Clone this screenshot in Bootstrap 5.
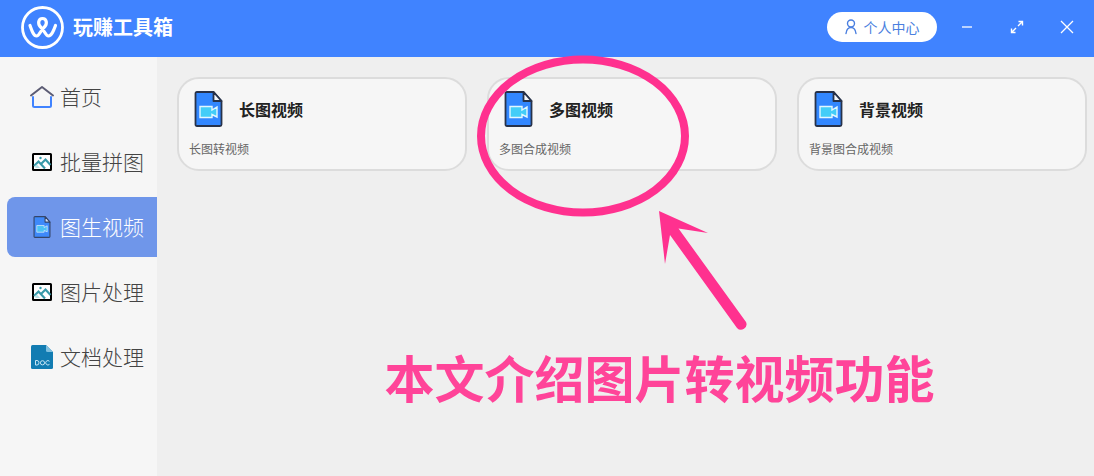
<!DOCTYPE html>
<html lang="zh-CN">
<head>
<meta charset="utf-8">
<meta name="viewport" content="width=device-width, initial-scale=1">
<title>玩赚工具箱</title>
<link href="https://cdn.jsdelivr.net/npm/bootstrap@5.3.0/dist/css/bootstrap.min.css" rel="stylesheet">
<style>
  body { font-family: "Noto Sans CJK SC", sans-serif; background: #efefef; color: #333; }
  svg { flex: none; display: block; }
  .app-bar { height: 57px; background: #4083ff; padding: 0 2px 3px 21px; }
  .brand-name { font-size: 20px; line-height: 24px; margin-left: 9px; }
  .user-btn { width: 110px; height: 30px; font-size: 14px; line-height: 20px; color: #4a7fe0; gap: 7px; margin-right: 5px; }
  .user-btn:hover { background: #fff; color: #2f66cc; }
  .win-btn { width: 50px; height: 50px; }
  .side { width: 157px; flex: none; background: #f6f6f6; padding: 10px 0 0 7px; gap: 5px; }
  .side-link { height: 60px; padding-left: 22px; gap: 5px; font-size: 21px; line-height: 28px; font-weight: 300; color: #444; border-radius: 8px 0 0 8px; }
  .side-link svg { width: 26px; }
  .side-link span { padding-bottom: 2px; }
  .side-link.active { background: #6f96ea; color: #fff; }
  .side-link.active svg { opacity: .8; }
  .stage { padding: 20px 7px 20px 20px; min-width: 0; }
  .tools { display: grid; grid-template-columns: repeat(3, minmax(0, 1fr)); gap: 20px; }
  .tool { background: #f6f6f6; border: 2px solid #dcdcdc; border-radius: 22px; padding: 12px 10px 11px; color: #222; }
  .tool-head { gap: 16px; padding-left: 5px; height: 36px; }
  .tool-name { font-size: 16px; line-height: 20px; }
  .tool-note { font-size: 12px; line-height: 18px; color: #666; margin-top: 13px; }
  .callout { left: -12px; top: -24px; z-index: 5; pointer-events: none; }
  .caption { font-size: 50px; line-height: 60px; color: #ff4499; margin-top: 175px; padding-left: 55px; }
</style>
</head>
<body>
<svg width="0" height="0" class="position-absolute" aria-hidden="true">
  <symbol id="video-file" viewBox="0 0 28 36">
    <path d="M1 2.500q0-1.500 1.500-1.500H19L27 10V33.500q0 1.500-1.500 1.500H2.500Q1 35 1 33.500Z" fill="#3287ff" stroke="#27324a" stroke-width="1.800"/>
    <path d="M19 1V10H27Z" fill="#f4f7fb" stroke="#27324a" stroke-width="1.800" stroke-linejoin="round"/>
    <path d="M5.500 15.500H17.500V19L22.500 16V26L17.500 23.500V26.500H5.500Z" fill="#43cdf8" stroke="#e2f7ff" stroke-width="1.400"/>
  </symbol>
  <symbol id="picture" viewBox="0 0 26 20">
    <rect x="4" y="2" width="18" height="16" rx=".5" fill="#fff" stroke="#000" stroke-width="2"/>
    <path d="M5 14 9.500 9.500 16 16.500M11.500 12.500 16.500 7.500 21.500 13" fill="none" stroke="#389aaa" stroke-width="2.200"/>
    <path d="M5 14.500 8 12.500 11 16H7Z" fill="#b9e2e7"/>
    <circle cx="11.500" cy="6" r="1.200" fill="#389aaa"/>
  </symbol>
</svg>
<div class="d-flex flex-column min-vh-100">
  <header class="app-bar d-flex align-items-center text-white">
    <svg width="43" height="43" viewBox="0 0 43 43" fill="none" stroke="#fff" stroke-linecap="round" stroke-linejoin="round" aria-hidden="true">
      <circle cx="21.500" cy="21.500" r="20" stroke-width="2.800"/>
      <path d="M9 19.500C11 25 12.500 30 15.500 30C18.500 30 19 25 23 21.500C27 18 25.500 12.500 21.500 12.500C17.500 12.500 16 18 20 21.500C24 25 24.500 30 27.500 30C30.500 30 32.500 25 34.500 19.500" stroke-width="3.200"/>
    </svg>
    <span class="brand-name fw-bold">玩赚工具箱</span>
    <button type="button" class="user-btn btn btn-light bg-white border-0 rounded-pill p-0 d-flex align-items-center justify-content-center ms-auto">
      <svg width="12" height="16" viewBox="0 0 12 16" fill="none" stroke="#4a7fe0" stroke-width="1.400" stroke-linecap="round" aria-hidden="true"><circle cx="6" cy="4.500" r="3.500"/><path d="M1 14.500C1.500 10.500 3.500 8.500 6 8.500S10.500 10.500 11 14.500"/></svg>
      个人中心
    </button>
    <button type="button" class="win-btn btn border-0 p-0 d-flex align-items-center justify-content-center" aria-label="最小化">
      <svg width="14" height="14" viewBox="0 0 14 14" stroke="#fff" stroke-width="1.300"><path d="M2 7H12"/></svg>
    </button>
    <button type="button" class="win-btn btn border-0 p-0 d-flex align-items-center justify-content-center" aria-label="最大化">
      <svg width="14" height="14" viewBox="0 0 14 14" fill="none" stroke="#fff" stroke-width="1.400"><path d="M8.500 1.500H12.500V5.500M12.500 1.500 8 6M5.500 12.500H1.500V8.500M1.500 12.500 6 8"/></svg>
    </button>
    <button type="button" class="win-btn btn border-0 p-0 d-flex align-items-center justify-content-center" aria-label="关闭">
      <svg width="14" height="14" viewBox="0 0 14 14" stroke="#fff" stroke-width="1.300"><path d="M1 1 13 13M13 1 1 13"/></svg>
    </button>
  </header>
  <div class="d-flex flex-grow-1">
    <nav class="side d-flex flex-column" aria-label="功能">
      <a href="#" class="side-link d-flex align-items-center text-decoration-none">
        <svg height="24" viewBox="0 0 26 24" fill="none" stroke-width="2" stroke-linecap="round" stroke-linejoin="round" aria-hidden="true"><path d="M4 12V20.500Q4 22 5.500 22H20.500Q22 22 22 20.500V12" stroke="#4083ff"/><path d="M2 10.500 13 2 24 10.500" stroke="#5c5c74"/></svg>
        <span>首页</span></a>
      <a href="#" class="side-link d-flex align-items-center text-decoration-none">
        <svg height="20" aria-hidden="true"><use href="#picture"/></svg>
        <span>批量拼图</span></a>
      <a href="#" class="side-link active d-flex align-items-center text-decoration-none" aria-current="page">
        <svg height="22" aria-hidden="true"><use href="#video-file"/></svg>
        <span>图生视频</span></a>
      <a href="#" class="side-link d-flex align-items-center text-decoration-none">
        <svg height="20" aria-hidden="true"><use href="#picture"/></svg>
        <span>图片处理</span></a>
      <a href="#" class="side-link d-flex align-items-center text-decoration-none">
        <svg height="24" viewBox="0 0 26 24" aria-hidden="true"><path d="M2 1.500Q2 0 3.500 0H17L24 7V22.500Q24 24 22.500 24H3.500Q2 24 2 22.500Z" fill="#127cb2"/><path d="M17 0 24 7H18.500Q17 7 17 5.500Z" fill="#7fc0e0"/>
          <g fill="none" stroke="#c4e5f5" stroke-width="1"><path d="M6.500 15.500V20H8Q10 20 10 17.750T8 15.500Z"/><circle cx="13.500" cy="17.800" r="2.100"/><path d="M20.500 16.300A2.200 2.200 0 1 0 20.500 19.300"/></g></svg>
        <span>文档处理</span></a>
    </nav>
    <main class="stage flex-grow-1">
      <div class="tools">
        <a href="#" class="tool d-block text-decoration-none">
          <div class="tool-head d-flex align-items-center"><svg width="29" height="36" aria-hidden="true"><use href="#video-file"/></svg><span class="tool-name fw-bold">长图视频</span></div>
          <div class="tool-note">长图转视频</div>
        </a>
        <a href="#" class="tool d-block text-decoration-none position-relative">
          <div class="tool-head d-flex align-items-center"><svg width="29" height="36" aria-hidden="true"><use href="#video-file"/></svg><span class="tool-name fw-bold">多图视频</span></div>
          <div class="tool-note">多图合成视频</div>
          <svg class="callout position-absolute" width="275" height="280" viewBox="0 0 275 280" aria-hidden="true">
            <ellipse cx="106" cy="81" rx="102" ry="76.500" fill="none" stroke="#ff318f" stroke-width="8"/>
            <path d="M182 156 231 178 201.500 173.500 269 267A5.500 5.500 0 0 1 260 273L193 180 188 209Z" fill="#ff318f"/>
          </svg>
        </a>
        <a href="#" class="tool d-block text-decoration-none">
          <div class="tool-head d-flex align-items-center"><svg width="29" height="36" aria-hidden="true"><use href="#video-file"/></svg><span class="tool-name fw-bold">背景视频</span></div>
          <div class="tool-note">背景图合成视频</div>
        </a>
      </div>
      <p class="caption fw-bold text-center mb-0">本文介绍图片转视频功能</p>
    </main>
  </div>
</div>
<script src="https://cdn.jsdelivr.net/npm/bootstrap@5.3.0/dist/js/bootstrap.bundle.min.js"></script>
</body>
</html>
